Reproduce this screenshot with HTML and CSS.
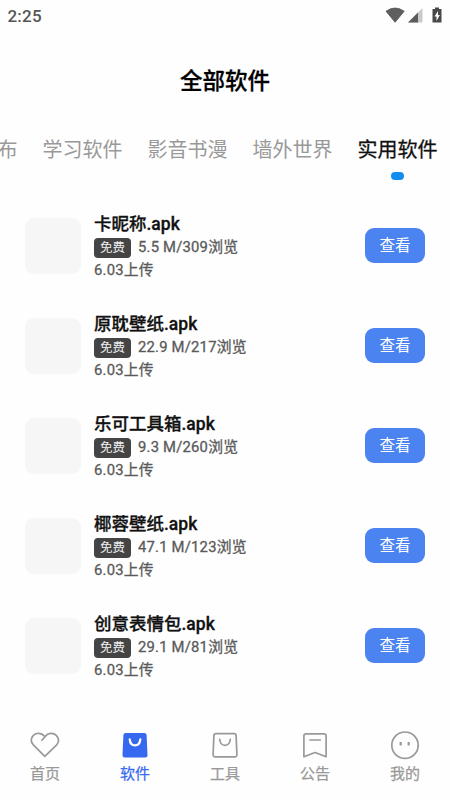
FILE: index.html
```html
<!DOCTYPE html>
<html lang="zh-CN">
<head>
<meta charset="utf-8">
<title>全部软件</title>
<link rel="stylesheet" href="styles.css">
</head>
<body>
<div class="app">
  <header class="status">
    <span class="clock">2:25</span>
    <svg class="status-icons" width="60" height="20" viewBox="0 0 60 20">
      <path d="M1 5.2Q10 -1.2 19.2 5.2L10.1 16.3Z" fill="#5f5f5f" stroke="#484848" stroke-width=".7"/>
      <path d="M37.5 2V16.5H23Z" fill="#c9c9c9"/>
      <path d="M33 6.5V16.5H23Z" fill="#5c5c5c"/>
      <path d="M50 1.5H54V3H56.5V16.5H47.5V3H50Z" fill="#484848"/>
      <path d="M53 5L49.5 10.5H51.5V15L54.8 9H53Z" fill="#fff"/>
    </svg>
  </header>
  <h1 class="title">全部软件</h1>
  <nav class="tabs">
    <span class="tab">布</span>
    <span class="tab">学习软件</span>
    <span class="tab">影音书漫</span>
    <span class="tab">墙外世界</span>
    <span class="tab active">实用软件</span>
  </nav>
  <main class="list">
    <article class="item">
      <div class="thumb"></div>
      <div class="info">
        <h2 class="name">卡昵称.apk</h2>
        <p class="meta"><span class="badge">免费</span>5.5 M/309浏览</p>
        <p class="date">6.03上传</p>
      </div>
      <button class="view">查看</button>
    </article>
    <article class="item">
      <div class="thumb"></div>
      <div class="info">
        <h2 class="name">原耽壁纸.apk</h2>
        <p class="meta"><span class="badge">免费</span>22.9 M/217浏览</p>
        <p class="date">6.03上传</p>
      </div>
      <button class="view">查看</button>
    </article>
    <article class="item">
      <div class="thumb"></div>
      <div class="info">
        <h2 class="name">乐可工具箱.apk</h2>
        <p class="meta"><span class="badge">免费</span>9.3 M/260浏览</p>
        <p class="date">6.03上传</p>
      </div>
      <button class="view">查看</button>
    </article>
    <article class="item">
      <div class="thumb"></div>
      <div class="info">
        <h2 class="name">椰蓉壁纸.apk</h2>
        <p class="meta"><span class="badge">免费</span>47.1 M/123浏览</p>
        <p class="date">6.03上传</p>
      </div>
      <button class="view">查看</button>
    </article>
    <article class="item">
      <div class="thumb"></div>
      <div class="info">
        <h2 class="name">创意表情包.apk</h2>
        <p class="meta"><span class="badge">免费</span>29.1 M/81浏览</p>
        <p class="date">6.03上传</p>
      </div>
      <button class="view">查看</button>
    </article>
  </main>
  <footer class="bottom">
    <div class="nav-item">
      <svg class="icon" viewBox="0 0 30 30"><path d="M11.9 10.2L15.2 6.6C18 2.6 23 2.4 26 5.2C29.4 8.6 29.2 12.2 26.2 15.4L14.8 26.3L3.6 15.2C.6 12 .7 8.2 3.6 5.2C6.7 2.4 11.2 2.7 14.2 5.8"/></svg>
      <span>首页</span>
    </div>
    <div class="nav-item selected">
      <svg class="icon" viewBox="0 0 30 30"><path class="bag" d="M5.6 3H24.4Q26.4 3 26.6 5L27.5 25Q27.6 27.5 25 27.5H5Q2.4 27.5 2.5 25L3.4 5Q3.6 3 5.6 3Z"/><path class="handle" d="M9.7 9.3C10.4 17.3 19.6 17.3 20.3 9.3"/></svg>
      <span>软件</span>
    </div>
    <div class="nav-item">
      <svg class="icon" viewBox="0 0 30 30"><path d="M6 3.6H24Q26 3.6 26.1 5.6L26.9 24.5Q27 26.8 24.7 26.8H5.3Q3 26.8 3.1 24.5L3.9 5.6Q4 3.6 6 3.6Z"/><path d="M9.7 9.3C10.4 17.3 19.6 17.3 20.3 9.3"/></svg>
      <span>工具</span>
    </div>
    <div class="nav-item">
      <svg class="icon" viewBox="0 0 30 30"><path d="M6 3.8H24Q26.1 3.8 26.1 5.9V26.8L15.1 22.5L3.9 26.8V5.9Q3.9 3.8 6 3.8Z"/><path d="M10 10H20.3"/></svg>
      <span>公告</span>
    </div>
    <div class="nav-item">
      <svg class="icon" viewBox="0 0 30 30"><circle cx="15" cy="15.2" r="13.2"/><path class="eyes" d="M10.7 12V15.4M18.7 12V15.4"/></svg>
      <span>我的</span>
    </div>
  </footer>
</div>
</body>
</html>
```

FILE: styles.css
```css
* { box-sizing: border-box; }
body {
  margin: 0;
  background: #fefefe;
  font-family: Roboto, "Noto Sans CJK SC", sans-serif;
}
.app {
  width: 450px;
  height: 800px;
  display: flex;
  flex-direction: column;
  overflow: hidden;
}
.status {
  height: 32px;
  flex: none;
  display: flex;
  justify-content: space-between;
  align-items: center;
  padding: 0 5px 0 7.5px;
}
.clock {
  font-size: 17px;
  font-weight: 500;
  letter-spacing: .2px;
  color: #555;
}
.status-icons { margin-bottom: 1px; }
.title {
  margin: 0;
  height: 96px;
  flex: none;
  line-height: 98px;
  text-align: center;
  font-size: 22.5px;
  font-weight: 500;
  color: #000;
  -webkit-text-stroke: .3px;
}
.tabs {
  height: 68px;
  flex: none;
  display: flex;
  justify-content: flex-end;
  gap: 25px;
  padding: 7px 12.5px 0 0;
  white-space: nowrap;
}
.tab {
  flex: none;
  display: flex;
  flex-direction: column;
  align-items: center;
  font-size: 20px;
  line-height: 30px;
  color: #999;
}
.tab.active { color: #111; -webkit-text-stroke: .3px; }
.tab.active::after {
  content: "";
  width: 13px;
  height: 8px;
  margin-top: 7px;
  border-radius: 4px;
  background: #118df0;
}
.list { flex: none; }
.item {
  height: 100px;
  display: flex;
  align-items: center;
  padding: 0 25px;
}
.thumb {
  width: 56px;
  height: 56px;
  border-radius: 9px;
  background: #f6f6f6;
}
.info {
  flex: 1;
  margin-left: 13px;
  padding-top: 1px;
}
.name, .meta, .date { margin: 0; white-space: nowrap; }
.name {
  padding-top: 1px;
  font-size: 17.5px;
  line-height: 24px;
  font-weight: 500;
  color: #111;
  -webkit-text-stroke: .3px;
}
.meta {
  display: flex;
  align-items: center;
  height: 23px;
}
.meta, .date {
  font-size: 14.8px;
  line-height: 23px;
  letter-spacing: .22px;
  color: #5a5a5a;
  -webkit-text-stroke: .3px;
}
.badge {
  width: 37px;
  height: 20px;
  margin-right: 7px;
  border-radius: 4px;
  background: #444;
  color: #eee;
  font-size: 12.5px;
  line-height: 20px;
  letter-spacing: 0;
  text-align: center;
  -webkit-text-stroke: 0;
}
.view {
  width: 60px;
  height: 35px;
  margin-bottom: 2px;
  padding: 2px 0 0;
  border: 0;
  border-radius: 9px;
  background: #4b83f1;
  color: #fff;
  font: 15.5px/33px Roboto, "Noto Sans CJK SC", sans-serif;
}
.bottom {
  flex: 1;
  display: flex;
  padding-top: 34px;
}
.nav-item {
  flex: 1;
  display: flex;
  flex-direction: column;
  align-items: center;
  font-size: 15px;
  line-height: 22px;
  color: #999;
  -webkit-text-stroke: .25px;
}
.icon {
  width: 30px;
  height: 30px;
  margin-bottom: 3px;
  fill: none;
  stroke: #999;
  stroke-width: 1.7;
  stroke-linecap: round;
  stroke-linejoin: round;
}
.eyes { stroke-width: 2.2; stroke-linecap: butt; }
.selected { color: #376bf0; }
.bag { fill: #3768f0; stroke: none; }
.handle { stroke: #fff; stroke-width: 2.2; }
```
